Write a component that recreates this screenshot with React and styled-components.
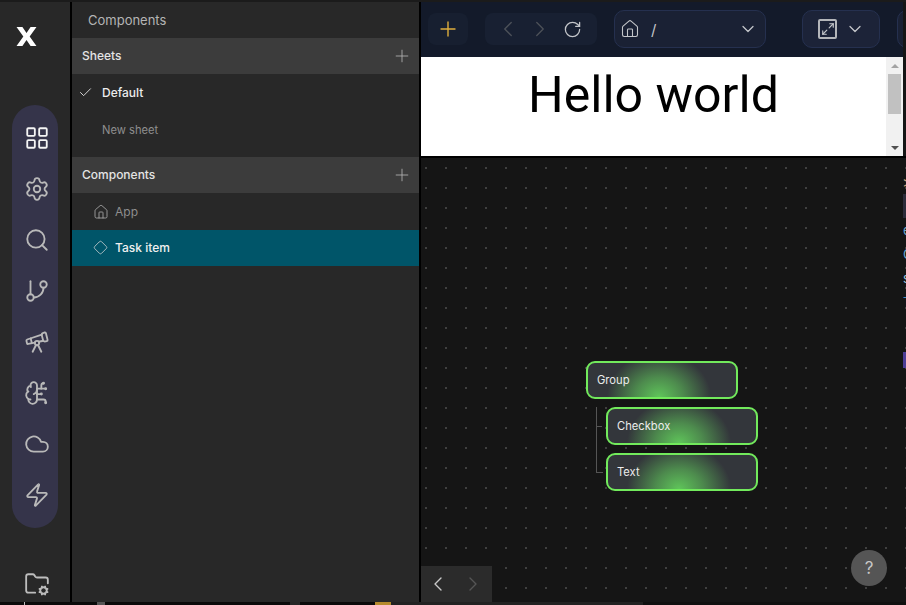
import styled, { createGlobalStyle } from 'styled-components'
import { LayoutGrid, Settings, Search, GitBranch, Telescope, BrainCircuit, Cloud, Zap, FolderCog, Plus, Check, Home, Diamond, ChevronLeft, ChevronRight, ChevronDown, RotateCw, Maximize2 } from 'lucide-react'

const GlobalStyle = createGlobalStyle`
  html, body {
    margin: 0;
    height: 100%;
    background: #171717;
    overflow: hidden;
  }
  * { box-sizing: border-box; }
  #root { height: 100%; }
`

const railIcons = [LayoutGrid, Settings, Search, GitBranch, Telescope, BrainCircuit, Cloud, Zap]

const peek = [
  { c: '≫', color: '#c9a27a' },
  { c: '', box: true },
  { c: 'e', color: '#6fa8cf' },
  { c: 'C', color: '#6fa8cf' },
  { c: 's', color: '#9cc4dd' },
  { c: 'T', color: '#3f8fc4' },
]

const bottomParts = [
  { w: 24, c: '#0a0a0a' },
  { w: 1, c: '#bbbbbb' },
  { w: 72, c: '#0a0a0a' },
  { w: 8, c: '#555555' },
  { w: 185, c: '#0a0a0a' },
  { w: 10, c: '#262626' },
  { w: 75, c: '#0a0a0a' },
  { w: 16, c: '#b58a2c' },
  { w: 252, c: '#222222' },
  { w: 263, c: '#101010' },
]

const Logo = () => (
  <svg width="21" height="21" viewBox="0 0 20 20">
    <path d="M0.5 1h5.6L10 6.6 13.9 1h5.6L13 10l6.5 9h-5.6L10 13.4 6.100 19H0.5L7 10z" fill="#fff" />
  </svg>
)

const Node = ({ label }) => (
  <NodeBox>
    <NodeLabel>{label}</NodeLabel>
  </NodeBox>
)

const App = () => {
  return (
    <Page>
      <GlobalStyle />
      <TopStrip />
      <Main>
        <Rail>
          <LogoWrap><Logo /></LogoWrap>
          <Pill>
            {railIcons.map((Icon, i) => (
              <PillIcon key={i} $active={i === 0}><Icon size={26} strokeWidth={1.7} /></PillIcon>
            ))}
          </Pill>
          <FolderWrap><FolderCog size={26} strokeWidth={1.7} /></FolderWrap>
        </Rail>
        <Panel>
          <PanelTitle>Components</PanelTitle>
          <SectionHead>
            <span>Sheets</span>
            <Plus size={20} strokeWidth={1} />
          </SectionHead>
          <SheetRow $on>
            <Check size={15} strokeWidth={1.4} />
            <span>Default</span>
          </SheetRow>
          <SheetRow>
            <span>New sheet</span>
          </SheetRow>
          <SectionGap />
          <SectionHead>
            <span>Components</span>
            <Plus size={20} strokeWidth={1} />
          </SectionHead>
          <CompRow>
            <RowIcon><Home size={16} strokeWidth={1.2} /></RowIcon>
            <span>App</span>
          </CompRow>
          <CompRow $selected>
            <RowIcon><Diamond size={15} strokeWidth={1.2} /></RowIcon>
            <span>Task item</span>
          </CompRow>
        </Panel>
        <Stage>
          <Toolbar>
            <AddBtn><Plus size={24} strokeWidth={1.4} /></AddBtn>
            <NavGroup>
              <NavIcon $dim><ChevronLeft size={26} strokeWidth={1.2} /></NavIcon>
              <NavIcon $dim><ChevronRight size={26} strokeWidth={1.2} /></NavIcon>
              <NavIcon><RotateCw size={19} strokeWidth={1.6} /></NavIcon>
            </NavGroup>
            <PathBox>
              <Home size={20} strokeWidth={1.3} />
              <PathText>/</PathText>
              <ChevronDown size={20} strokeWidth={1.5} />
            </PathBox>
            <SizeBox>
              <SizeFrame><Maximize2 size={14} strokeWidth={2} /></SizeFrame>
              <ChevronDown size={20} strokeWidth={1.5} />
            </SizeBox>
            <EdgeBox />
          </Toolbar>
          <Preview>
            <Hello>Hello world</Hello>
            <ScrollBar>
              <ArrowUp />
              <Thumb />
              <ArrowDown />
            </ScrollBar>
          </Preview>
          <Canvas>
            <Tree>
              <Node label="Group" />
              <Children>
                <Node label="Checkbox" />
                <Node label="Text" />
              </Children>
            </Tree>
            <PeekText>
              {peek.map((p, i) => <PeekChar key={i} $box={p.box} $color={p.color}>{p.c}</PeekChar>)}
              <PeekPurple />
            </PeekText>
            <Pager>
              <ChevronLeft size={24} strokeWidth={1.4} />
              <PagerDim><ChevronRight size={24} strokeWidth={1.4} /></PagerDim>
            </Pager>
            <Help>?</Help>
          </Canvas>
        </Stage>
      </Main>
      <BottomStrip>
        {bottomParts.map((p, i) => <BottomPart key={i} $w={p.w} $c={p.c} />)}
      </BottomStrip>
    </Page>
  )
}

export default App

const Page = styled.div`
  width: 906px;
  height: 605px;
  display: flex;
  flex-direction: column;
  font-family: "Inter", "Liberation Sans", sans-serif;
  overflow: hidden;
`

const TopStrip = styled.div`
  height: 2px;
  background: #1b1b1b;
  flex: none;
`

const BottomStrip = styled.div`
  height: 3px;
  flex: none;
  display: flex;
`

const BottomPart = styled.div`
  width: ${(p) => p.$w}px;
  background: ${(p) => p.$c};
`

const Main = styled.div`
  flex: 1;
  min-height: 0;
  display: flex;
`

const Rail = styled.div`
  width: 72px;
  flex: none;
  background: #282828;
  border-right: 2px solid #000;
  display: flex;
  flex-direction: column;
  align-items: center;
  padding-top: 24px;
`

const LogoWrap = styled.div`
  height: 21px;
  margin-left: -17px;
  display: flex;
`

const Pill = styled.div`
  width: 46px;
  height: 423px;
  flex: none;
  margin-top: 58px;
  border-radius: 23px;
  background: #35344a;
  display: flex;
  flex-direction: column;
  align-items: center;
  padding: 7px 0 0 4px;
`

const PillIcon = styled.div`
  height: 51px;
  flex: none;
  display: flex;
  align-items: center;
  justify-content: center;
  color: ${(p) => (p.$active ? '#f4f4f4' : '#b9b9b9')};
`

const FolderWrap = styled.div`
  margin-top: 43px;
  margin-left: 4px;
  color: #bdbdbd;
  display: flex;
`

const Panel = styled.div`
  width: 349px;
  flex: none;
  background: #282828;
  border-right: 2px solid #000;
`

const PanelTitle = styled.div`
  height: 36px;
  padding-left: 16px;
  display: flex;
  align-items: center;
  font-size: 13px;
  color: #b5b5b5;
`

const SectionHead = styled.div`
  height: 36px;
  background: #3c3c3c;
  display: flex;
  align-items: center;
  justify-content: space-between;
  padding: 0 7px 1px 10px;
  font-size: 12px;
  font-weight: 500;
  color: #e4e4e4;
  svg { color: #b4b4b4; }
`

const SheetRow = styled.div`
  height: 37px;
  display: flex;
  align-items: center;
  padding-left: ${(p) => (p.$on ? '6px' : '30px')};
  gap: 9px;
  font-size: ${(p) => (p.$on ? '12px' : '11.2px')};
  font-weight: ${(p) => (p.$on ? 500 : 400)};
  color: ${(p) => (p.$on ? '#ececec' : '#8e8e8e')};
`

const SectionGap = styled.div`
  height: 9px;
`

const CompRow = styled.div`
  height: 36px;
  margin-top: ${(p) => (p.$selected ? '0' : '1px')};
  display: flex;
  align-items: center;
  gap: 6px;
  padding: 0 0 1px 20px;
  font-size: 12px;
  font-weight: ${(p) => (p.$selected ? 500 : 400)};
  background: ${(p) => (p.$selected ? '#005569' : 'transparent')};
  color: ${(p) => (p.$selected ? '#f0f0f0' : '#8e8e8e')};
  svg { color: ${(p) => (p.$selected ? '#d8d8d8' : '#b0b0b0')}; }
`

const RowIcon = styled.div`
  width: 17px;
  display: flex;
  justify-content: center;
`

const Stage = styled.div`
  flex: 1;
  min-width: 0;
  display: flex;
  flex-direction: column;
  background: #161616;
`

const Toolbar = styled.div`
  height: 55px;
  flex: none;
  margin-right: 3px;
  background: #131a2a;
  display: flex;
  align-items: flex-start;
  padding: 11px 0 0 7px;
  overflow: hidden;
`

const AddBtn = styled.div`
  width: 40px;
  height: 32px;
  flex: none;
  border-radius: 8px;
  background: #171f30;
  color: #dfae3c;
  display: flex;
  align-items: center;
  justify-content: center;
`

const NavGroup = styled.div`
  width: 112px;
  height: 32px;
  flex: none;
  margin-left: 17px;
  border-radius: 8px;
  background: #182032;
  display: flex;
  align-items: center;
  padding-left: 7px;
`

const NavIcon = styled.div`
  width: 32px;
  display: flex;
  justify-content: center;
  color: ${(p) => (p.$dim ? '#4d5159' : '#c4c6ca')};
`

const PathBox = styled.div`
  width: 152px;
  height: 38px;
  flex: none;
  margin: -3px 0 0 17px;
  border-radius: 10px;
  border: 1px solid #25304f;
  background: #1a2134;
  color: #c4c6ca;
  display: flex;
  align-items: center;
  padding: 0 7px 0 5px;
`

const PathText = styled.span`
  flex: 1;
  margin-left: 11px;
  font-size: 15px;
`

const SizeBox = styled.div`
  width: 78px;
  height: 38px;
  flex: none;
  margin: -3px 0 0 36px;
  border-radius: 10px;
  border: 1px solid #25304f;
  background: #1c2338;
  color: #c4c6ca;
  display: flex;
  align-items: center;
  gap: 8px;
  padding-left: 15px;
`

const SizeFrame = styled.div`
  width: 19px;
  height: 20px;
  border: 2px solid #b4b6ba;
  border-radius: 2px;
  display: flex;
  align-items: center;
  justify-content: center;
`

const EdgeBox = styled.div`
  width: 30px;
  height: 38px;
  flex: none;
  margin: -3px 0 0 17px;
  border-radius: 10px;
  border: 1px solid #25304f;
  background: #1a2134;
`

const Preview = styled.div`
  height: 99px;
  flex: none;
  margin-right: 3px;
  background: #fff;
  display: flex;
`

const Hello = styled.div`
  flex: 1;
  text-align: center;
  font-family: "Roboto", sans-serif;
  font-size: 50px;
  line-height: 76px;
  color: #000;
`

const ScrollBar = styled.div`
  width: 17px;
  flex: none;
  background: #f1f1f1;
  display: flex;
  flex-direction: column;
  align-items: center;
`

const ArrowUp = styled.div`
  margin-top: 7px;
  border-left: 4px solid transparent;
  border-right: 4px solid transparent;
  border-bottom: 4px solid #a3a3a3;
`

const Thumb = styled.div`
  width: 13px;
  height: 40px;
  margin-top: 6px;
  background: #c1c1c1;
`

const ArrowDown = styled.div`
  margin-top: auto;
  margin-bottom: 6px;
  border-left: 4px solid transparent;
  border-right: 4px solid transparent;
  border-top: 4px solid #505050;
`

const Canvas = styled.div`
  flex: 1;
  position: relative;
  border-top: 2px solid #000;
  background-color: #151515;
  background-image: radial-gradient(circle at 1px 1px, #3f3f3f 0.9px, transparent 1.1px);
  background-size: 20px 20px;
  background-position: 4px 9px;
  overflow: hidden;
`

const Tree = styled.div`
  position: absolute;
  left: 165px;
  top: 203px;
`

const NodeBox = styled.div`
  width: 152px;
  height: 38px;
  border: 2px solid #72ea5c;
  border-radius: 9px;
  background:
    radial-gradient(ellipse 52px 44px at 48% 100%, #5fc45a 0%, rgba(95, 196, 90, 0.6) 45%, rgba(95, 196, 90, 0) 100%),
    #33363b;
  display: flex;
  align-items: center;
  padding-left: 9px;
`

const NodeLabel = styled.span`
  font-size: 11.2px;
  color: #ececec;
`

const Children = styled.div`
  position: relative;
  margin-top: 8px;
  padding-left: 20px;
  display: flex;
  flex-direction: column;
  gap: 8px;
  &::before {
    content: '';
    position: absolute;
    left: 10px;
    top: 0;
    width: 6px;
    height: 65px;
    border-left: 1px solid #555;
    border-bottom: 1px solid #555;
  }
  &::after {
    content: '';
    position: absolute;
    left: 10px;
    top: 19px;
    width: 6px;
    border-top: 1px solid #555;
  }
`

const PeekText = styled.div`
  position: absolute;
  left: 482px;
  top: 12px;
  width: 3px;
  overflow: hidden;
  display: flex;
  flex-direction: column;
  font-size: 13px;
`

const PeekChar = styled.div`
  height: 24px;
  line-height: 24px;
  color: ${(p) => p.$color || 'transparent'};
  background: ${(p) => (p.$box ? '#2c2c3a' : 'transparent')};
`

const PeekPurple = styled.div`
  height: 16px;
  margin-top: 38px;
  background: #4d3d96;
`

const Pager = styled.div`
  position: absolute;
  left: 0;
  bottom: 0;
  width: 71px;
  height: 36px;
  background: #2b2b2b;
  color: #c8c8c8;
  display: flex;
  align-items: center;
  gap: 11px;
  padding-left: 5px;
`

const PagerDim = styled.div`
  display: flex;
  color: #555;
`

const Help = styled.div`
  position: absolute;
  left: 430px;
  top: 392px;
  width: 36px;
  height: 36px;
  border-radius: 50%;
  background: #555;
  color: #c8c8c8;
  font-size: 17px;
  display: flex;
  align-items: center;
  justify-content: center;
`
